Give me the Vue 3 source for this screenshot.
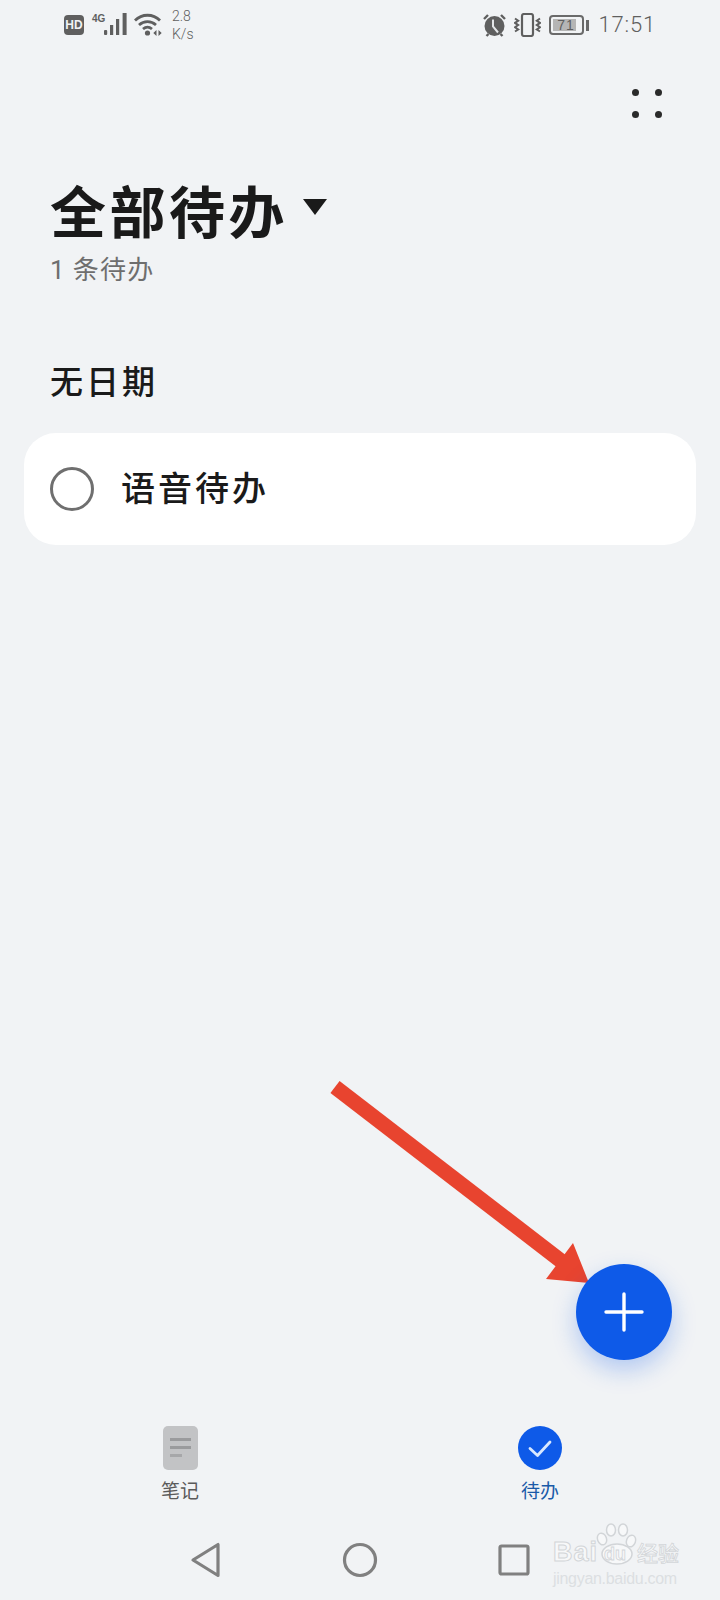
<template>
  <div class="page">
    <!-- status bar -->
    <header class="status">
      <div class="status-left">
        <span class="hd">HD</span>
        <div class="signal">
          <span class="net">4G</span>
          <svg width="24" height="24" viewBox="0 0 24 24" fill="#5f5f5f">
            <rect x="0" y="17" width="3.2" height="5" rx="1" />
            <rect x="6" y="12" width="3.2" height="10" />
            <rect x="12" y="6" width="3.2" height="16" />
            <rect x="18.6" y="0" width="4" height="22" />
          </svg>
        </div>
        <svg class="wifi" width="30" height="24" viewBox="0 0 30 24" fill="none" stroke="#5f5f5f" stroke-width="2.8">
          <path d="M1 7.5C8 .5 19 .5 26 7.5" />
          <path d="M5 12C10 7.5 17 7.5 22 12" />
          <path d="M9 16C12 13.5 15 13.5 18 16" />
          <circle cx="13.5" cy="20" r="2.6" fill="#5f5f5f" stroke="none" />
          <path d="M22.5 17v6l-3.2-3zM24.5 17v6l3.2-3z" fill="#5f5f5f" stroke="none" />
        </svg>
        <div class="speed">
          <span>2.8</span>
          <span>K/s</span>
        </div>
      </div>
      <div class="status-right">
        <svg class="alarm" width="23" height="24" viewBox="0 0 23 24">
          <circle cx="11.5" cy="13" r="10" fill="#5f5f5f" />
          <path d="M10 6.5v7l5 6" fill="none" stroke="#e4e6e8" stroke-width="2" />
          <path d="M1 6l4-4M22 6l-4-4M3.5 23l2-2M19.5 23l-2-2" stroke="#5f5f5f" stroke-width="2.4" />
        </svg>
        <svg class="vibrate" width="27" height="24" viewBox="0 0 27 24" fill="none" stroke="#5f5f5f">
          <rect x="8" y="1" width="11" height="22" rx="2" stroke-width="2.2" />
          <path d="M1 5.5l3.2 2.2-3.2 2.2 3.2 2.2-3.2 2.2 3.2 2.2-3.2 2" stroke-width="2" />
          <path d="M26 5.5l-3.2 2.2 3.2 2.2-3.2 2.2 3.2 2.2-3.2 2.2 3.2 2" stroke-width="2" />
        </svg>
        <div class="battery">
          <div class="battery-body">
            <span class="battery-fill"></span>
            <span class="battery-num">71</span>
          </div>
          <span class="battery-tip"></span>
        </div>
        <span class="time">17:51</span>
      </div>
    </header>

    <div class="toolbar">
      <div class="dots">
        <i></i><i></i><i></i><i></i>
      </div>
    </div>

    <section class="head">
      <div class="title-row">
        <h1>全部待办</h1>
        <span class="caret"></span>
      </div>
      <p class="count"><span class="count-num">1</span> 条待办</p>
    </section>

    <h2 class="group">无日期</h2>

    <div class="card">
      <span class="radio"></span>
      <span class="todo">语音待办</span>
    </div>

    <nav class="tabs">
      <div class="tab">
        <span class="note-icon"><i></i><i></i><i></i></span>
        <span class="tab-label">笔记</span>
      </div>
      <div class="tab active">
        <svg width="44" height="44" viewBox="0 0 44 44">
          <circle cx="22" cy="22" r="22" fill="#0e5ae8" />
          <path d="M12 22.5l7.5 7L32 16" fill="none" stroke="#d8e8ff" stroke-width="2.8" stroke-linecap="round" stroke-linejoin="round" />
        </svg>
        <span class="tab-label">待办</span>
      </div>
    </nav>

    <div class="sysnav">
      <svg width="32" height="36" viewBox="0 0 32 36" fill="none" stroke="#808080" stroke-width="3.2" stroke-linejoin="round">
        <path d="M28 2.5v31L3 18z" />
      </svg>
      <svg width="36" height="36" viewBox="0 0 36 36" fill="none" stroke="#808080" stroke-width="3.2">
        <circle cx="18" cy="18" r="15.5" />
      </svg>
      <svg width="32" height="32" viewBox="0 0 32 32" fill="none" stroke="#808080" stroke-width="3.2" stroke-linejoin="round">
        <rect x="2" y="2" width="28" height="28" rx="1.5" />
      </svg>
    </div>

    <!-- annotation arrow laid over the screenshot -->
    <svg class="arrow" width="280" height="220" viewBox="320 1075 280 220">
      <path d="M335 1087L565 1264" stroke="#e8442f" stroke-width="15" />
      <path d="M573 1243L589 1283L546 1279z" fill="#e8442f" />
    </svg>

    <button class="fab" type="button">
      <svg width="44" height="44" viewBox="0 0 44 44" stroke="#fff" stroke-width="3.4" stroke-linecap="round">
        <path d="M22 4v36M4 22h36" />
      </svg>
    </button>

    <div class="watermark">
      <svg class="paw" width="44" height="44" viewBox="0 0 44 44" fill="#f7f8f9" stroke="#d2d5d8" stroke-width="1.5">
        <ellipse cx="8" cy="16" rx="4.5" ry="6" transform="rotate(-20 8 16)" />
        <ellipse cx="17" cy="7" rx="4.5" ry="6" />
        <ellipse cx="29" cy="7" rx="4.5" ry="6" />
        <ellipse cx="37" cy="18" rx="4.5" ry="6" transform="rotate(20 37 18)" />
        <ellipse cx="23" cy="31" rx="15" ry="10" />
      </svg>
      <span class="wm-du">du</span>
      <div class="wm-logo">
        <span class="wm-bai">Bai</span>
        <span class="wm-cn">经验</span>
      </div>
      <div class="wm-url">jingyan.baidu.com</div>
    </div>
  </div>
</template>

<script setup>
</script>

<style>
html,
body {
  margin: 0;
  background: #f1f3f5;
}
</style>

<style scoped>
.page {
  position: relative;
  width: 720px;
  height: 1600px;
  overflow: hidden;
  display: flex;
  flex-direction: column;
  background: #f1f3f5;
  font-family: "Noto Sans CJK SC", "Liberation Sans", sans-serif;
  color: #1a1a1a;
}

.status {
  display: flex;
  justify-content: space-between;
  align-items: center;
  height: 50px;
  padding: 0 64px 0 64px;
  color: #5f5f5f;
}
.status-left,
.status-right {
  display: flex;
  align-items: center;
}
.hd {
  width: 20px;
  height: 20px;
  border-radius: 4px;
  background: #5f5f5f;
  color: #f1f3f5;
  font: bold 12px/20px "Liberation Sans", sans-serif;
  text-align: center;
}
.signal {
  position: relative;
  margin-left: 20px;
  width: 24px;
  height: 24px;
}
.net {
  position: absolute;
  left: -12px;
  top: 1px;
  font: bold 10px/10px "Liberation Sans", sans-serif;
}
.wifi {
  margin-left: 6px;
}
.speed {
  display: flex;
  flex-direction: column;
  margin-left: 8px;
  font: 300 14px/18px Roboto, sans-serif;
}
.vibrate {
  margin-left: 8px;
}
.battery {
  display: flex;
  align-items: center;
  margin-left: 8px;
}
.battery-body {
  position: relative;
  width: 35px;
  height: 20px;
  box-sizing: border-box;
  border: 2px solid #6a6a6a;
  border-radius: 4px;
}
.battery-fill {
  position: absolute;
  left: 2px;
  top: 2px;
  bottom: 2px;
  width: 23px;
  background: #b5b5b5;
}
.battery-num {
  position: absolute;
  inset: 0;
  text-align: center;
  font: 14px/16px "Liberation Sans", sans-serif;
  letter-spacing: 1px;
}
.battery-tip {
  width: 3px;
  height: 11px;
  margin-left: 2px;
  background: #6a6a6a;
}
.time {
  margin-left: 10px;
  font: 300 22px/28px Roboto, sans-serif;
  letter-spacing: 0.8px;
}

.toolbar {
  display: flex;
  justify-content: flex-end;
  padding: 39px 58px 0 0;
}
.dots {
  display: grid;
  grid-template-columns: 7px 7px;
  gap: 15px 16px;
}
.dots i {
  width: 7px;
  height: 7px;
  border-radius: 50%;
  background: #2a2a2a;
}

.head {
  padding: 55px 50px 0;
}
.title-row {
  display: flex;
  align-items: center;
  height: 72px;
}
h1 {
  margin: 0;
  font-size: 56px;
  line-height: 72px;
  font-weight: 700;
  letter-spacing: 3.5px;
}
.caret {
  width: 0;
  height: 0;
  margin: -5px 0 0 15px;
  border-left: 12px solid transparent;
  border-right: 12px solid transparent;
  border-top: 16px solid #1a1a1a;
}
.count {
  margin: 7px 0 0;
  font-size: 26px;
  line-height: 32px;
  color: #6e6e6e;
  letter-spacing: 1.2px;
}
.count-num {
  font-family: Roboto, sans-serif;
}

.group {
  margin: 70px 0 0 50px;
  font-size: 33px;
  line-height: 48px;
  font-weight: 500;
  letter-spacing: 3px;
}

.card {
  display: flex;
  align-items: center;
  gap: 27px;
  box-sizing: border-box;
  height: 112px;
  margin: 29px 24px 0;
  padding-left: 26px;
  background: #fff;
  border-radius: 32px;
}
.radio {
  box-sizing: border-box;
  width: 44px;
  height: 44px;
  border: 3px solid #6f6f6f;
  border-radius: 50%;
}
.todo {
  margin-top: -6px;
  font-size: 34px;
  font-weight: 500;
  letter-spacing: 3px;
}

.tabs {
  display: flex;
  margin-top: auto;
  padding-left: 160px;
}
.tab {
  display: flex;
  flex-direction: column;
  align-items: center;
  width: 40px;
  gap: 8px;
}
.tab.active {
  margin-left: 320px;
}
.tab-label {
  font-size: 19px;
  line-height: 24px;
  color: #5a5a5a;
  white-space: nowrap;
}
.tab.active .tab-label {
  color: #1a5aa8;
}
.note-icon {
  display: flex;
  flex-direction: column;
  gap: 5px;
  box-sizing: border-box;
  width: 35px;
  height: 44px;
  padding: 12px 7px 0;
  border-radius: 5px;
  background: #c2c3c5;
}
.note-icon i {
  height: 3px;
  background: #9a9b9d;
}
.note-icon i:last-child {
  width: 12px;
  opacity: 0.7;
}

.sysnav {
  display: flex;
  align-items: center;
  height: 60px;
  margin-top: 28px;
  margin-bottom: 10px;
  padding-left: 190px;
  gap: 120px;
}

.arrow {
  position: absolute;
  left: 320px;
  top: 1075px;
  filter: blur(0.7px);
}

.fab {
  position: absolute;
  left: 576px;
  top: 1264px;
  display: flex;
  align-items: center;
  justify-content: center;
  width: 96px;
  height: 96px;
  padding: 0;
  border: 0;
  border-radius: 50%;
  background: #0e5ae8;
  box-shadow: 0 10px 24px rgba(14, 90, 232, 0.28);
}

.watermark {
  position: absolute;
  left: 553px;
  top: 1523px;
  width: 126px;
  height: 64px;
  color: #f7f8f9;
}
.paw {
  position: absolute;
  left: 41px;
  top: 0;
}
.wm-du {
  position: absolute;
  left: 51px;
  top: 21px;
  font: bold 18px/20px "Liberation Sans", sans-serif;
  -webkit-text-stroke: 0.8px #d2d5d8;
}
.wm-logo {
  display: flex;
  justify-content: space-between;
  align-items: center;
  height: 24px;
  padding-top: 17px;
}
.wm-bai {
  font: bold 27px/24px "Liberation Sans", sans-serif;
  letter-spacing: 1px;
  -webkit-text-stroke: 1px #d2d5d8;
}
.wm-cn {
  font: 500 21px/24px "Noto Sans CJK SC", sans-serif;
  -webkit-text-stroke: 0.8px #d2d5d8;
}
.wm-url {
  margin-top: 6px;
  font: 16px/18px "Liberation Sans", sans-serif;
  letter-spacing: -0.3px;
  color: #dcdfe2;
}
</style>
